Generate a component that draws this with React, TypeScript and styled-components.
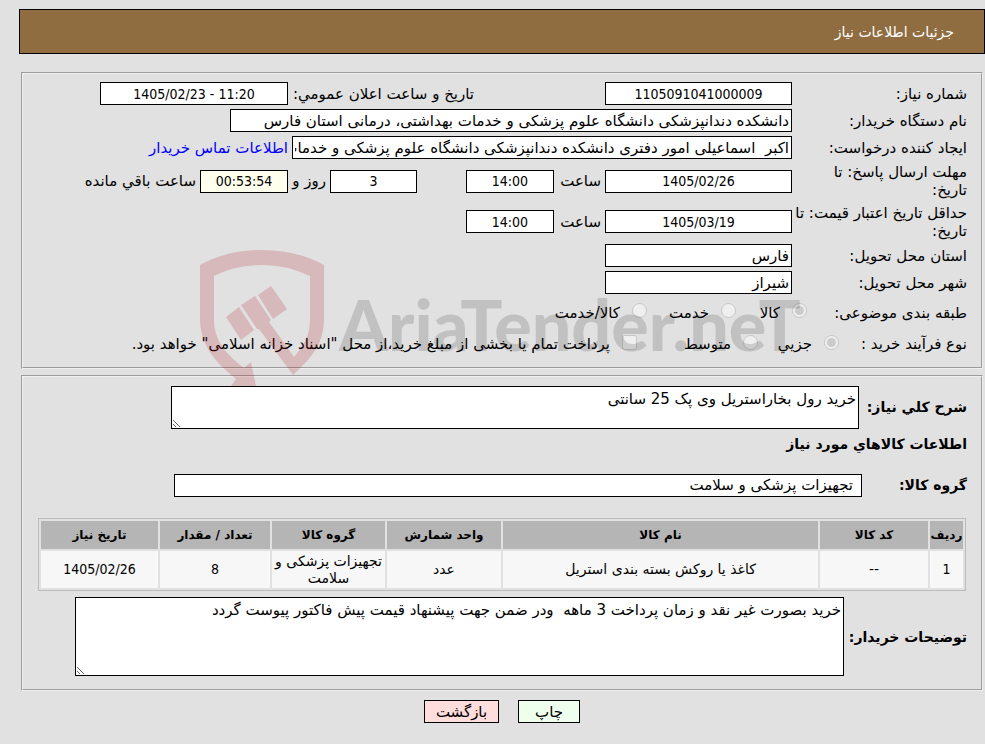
import React from "react";
import styled, { createGlobalStyle } from "styled-components";

const FONT = `"DejaVu Sans", sans-serif`;
const NUMERIC_FONT = `"DejaVu Sans Condensed", "DejaVu Sans", sans-serif`;

const GlobalStyle = createGlobalStyle`
  * { box-sizing: border-box; }
  body { margin: 0; background: #e1e1e1; }
  body, input, textarea, button { font-family: ${FONT}; color: #000; }
`;

const Page = styled.main`
  padding: 9px 0 22px 19px;
  font-size: 15px;
  line-height: 18px;
  min-height: 100vh;
`;

const TitleBar = styled.header`
  display: flex;
  align-items: center;
  height: 45px;
  padding: 0 30px;
  border: 1px solid #000;
  background: #8f6d40;
`;

const Title = styled.h1`
  margin: 0;
  font-size: 14px;
  font-weight: normal;
  color: #fff;
`;

const Panels = styled.div`
  position: relative;
  display: flex;
  flex-direction: column;
  gap: 6px;
  margin: 18px 2px 0;
`;

const Panel = styled.section<{ $top: number; $bottom: number }>`
  padding: ${(p) => p.$top}px 14px ${(p) => p.$bottom}px;
  border: 2px solid;
  border-style: groove;
  border-color: #f0f0f0;
`;

const Row = styled.div<{ $h?: number }>`
  display: flex;
  align-items: center;
  min-height: ${(p) => p.$h ?? 27}px;
`;

const Label = styled.label<{ $w?: number }>`
  flex: none;
  width: ${(p) => (p.$w ? `${p.$w}px` : "auto")};
  white-space: nowrap;
`;

const StrongLabel = styled(Label)`
  font-size: 14px;
  font-weight: bold;
`;

const RowTitle = styled.span<{ $w: number }>`
  flex: none;
  width: ${(p) => p.$w}px;
`;

const Group = styled.div<{ $before?: number }>`
  display: flex;
  align-items: center;
  gap: 4px;
  margin-inline-start: ${(p) => p.$before ?? 0}px;
`;

const Field = styled.input<{ $w: number; $pad?: number }>`
  width: ${(p) => p.$w}px;
  height: 23px;
  padding: 0 ${(p) => p.$pad ?? 2}px;
  border: 1px solid #000;
  border-radius: 0;
  background: #fff;
  font-size: 15px;
`;

const NumberField = styled(Field)<{ $tint?: string }>`
  background: ${(p) => p.$tint ?? "#fff"};
  font-family: ${NUMERIC_FONT};
  font-stretch: condensed;
  font-size: 14px;
  text-align: center;
`;

const Area = styled.textarea<{ $w: number; $h: number }>`
  display: block;
  width: ${(p) => p.$w}px;
  height: ${(p) => p.$h}px;
  padding: 3px 2px;
  border: 1px solid #000;
  border-radius: 0;
  background: #fff;
  font-size: 15px;
  line-height: 18px;
`;

const ContactLink = styled.a`
  color: #00f;
  text-decoration: none;
`;

const Choice = styled.label<{ $w?: number }>`
  display: flex;
  align-items: center;
  gap: 12px;
  width: ${(p) => (p.$w ? `${p.$w}px` : "auto")};
  white-space: nowrap;
`;

const Tick = styled.input`
  flex: none;
  width: 15px;
  height: 15px;
  margin: 0 0 4px;
`;

const SectionTitle = styled.h2`
  margin: 0;
  font-size: 14px;
  line-height: 18px;
`;

const ItemsFrame = styled.div`
  padding: 4px 1px 6px;
`;

const Items = styled.table`
  width: 100%;
  border: 1px solid #bbb;
  border-collapse: separate;
  border-spacing: 2px;
  table-layout: fixed;
  font-size: 14px;
  line-height: 17px;
  text-align: center;
`;

const HeadCell = styled.th<{ $w?: number }>`
  width: ${(p) => (p.$w ? `${p.$w}px` : "auto")};
  height: 28px;
  padding: 0;
  background: #b5b5b5;
  font-size: 12px;
  white-space: nowrap;
`;

const Cell = styled.td<{ $numeric?: boolean }>`
  height: 37px;
  padding: 1px;
  background: #f7f7f7;
  font-family: ${(p) => (p.$numeric ? NUMERIC_FONT : FONT)};
  font-stretch: ${(p) => (p.$numeric ? "condensed" : "normal")};
`;

const Actions = styled.footer`
  display: flex;
  justify-content: center;
  gap: 19px;
  margin: 9px 0 0;
`;

const Action = styled.button<{ $tint: string; $w: number }>`
  width: ${(p) => p.$w}px;
  height: 23px;
  padding: 0;
  border: 1px solid #000;
  border-radius: 0;
  background: ${(p) => p.$tint};
  font-size: 15px;
`;

const Watermark = styled.div`
  position: absolute;
  top: 177px;
  left: 178px;
  pointer-events: none;
`;

function Brand() {
  return (
    <Watermark aria-hidden="true">
      <svg width="620" height="140" viewBox="0 0 620 140" direction="ltr">
        <g fill="#b01020" fillOpacity="0.19">
          <path d="M1 16Q28 1 63 1Q98 1 125 16V69C125 92 116 106 94 126L60 80L58 80L42 56L56 47L72 71L70 73L95 108C106 95 111 86 111 69V27Q88 16 63 16Q36 16 15 27V71C15 92 28 106 45 119L52 113L57 137H32L37 130C12 110 1 93 1 69Z" />
          <path d="M27 68L40 58L55 81L42 91ZM59 46L72 37L88 60L74 70Z" />
        </g>
        <text x="140" y="102" fontFamily="Lato" fontWeight="900" fontSize="70" fill="#000" fillOpacity="0.14">
          AriaTender.neT
        </text>
      </svg>
    </Watermark>
  );
}

const COLUMNS: { title: string; width?: number; value: string; numeric?: boolean }[] = [
  { title: "ردیف", width: 33, value: "1", numeric: true },
  { title: "کد کالا", width: 108, value: "--" },
  { title: "نام کالا", value: "کاغذ یا روکش بسته بندی استریل" },
  { title: "واحد شمارش", width: 114, value: "عدد" },
  { title: "گروه کالا", width: 113, value: "تجهیزات پزشکی و سلامت" },
  { title: "تعداد / مقدار", width: 110, value: "8", numeric: true },
  { title: "تاریخ نیاز", width: 117, value: "1405/02/26", numeric: true },
];

export default function App() {
  return (
    <Page dir="rtl" lang="fa">
      <GlobalStyle />
      <TitleBar>
        <Title>جزئیات اطلاعات نیاز</Title>
      </TitleBar>
      <Panels>
        <Panel $top={6} $bottom={8}>
          <Row>
            <Label $w={175} htmlFor="number">شماره نیاز:</Label>
            <NumberField id="number" $w={187} readOnly value="1105091041000009" />
            <Group $before={131}>
              <Label $w={182} htmlFor="announced">تاریخ و ساعت اعلان عمومي:</Label>
              <NumberField id="announced" $w={188} dir="ltr" readOnly value="1405/02/23 - 11:20" />
            </Group>
          </Row>
          <Row>
            <Label $w={175} htmlFor="buyer">نام دستگاه خریدار:</Label>
            <Field id="buyer" $w={562} readOnly value="دانشکده دندانپزشکی دانشگاه علوم پزشکی و خدمات بهداشتی، درمانی استان فارس" />
          </Row>
          <Row>
            <Label $w={175} htmlFor="creator">ایجاد کننده درخواست:</Label>
            <Group>
              <Field id="creator" $w={500} readOnly value="اکبر  اسماعیلی امور دفتری دانشکده دندانپزشکی دانشگاه علوم پزشکی و خدمات بهداشتی، درمانی استان فارس" />
              <ContactLink href="#contact">اطلاعات تماس خریدار</ContactLink>
            </Group>
          </Row>
          <Row $h={40}>
            <Label $w={175} htmlFor="deadline">مهلت ارسال پاسخ: تا<br />تاریخ:</Label>
            <Group>
              <NumberField id="deadline" $w={187} readOnly value="1405/02/26" />
              <Label $w={43} htmlFor="deadline-time">ساعت</Label>
              <NumberField id="deadline-time" $w={88} readOnly value="14:00" />
            </Group>
            <Group $before={49}>
              <NumberField id="days" $w={87} readOnly value="3" />
              <Label $w={34} htmlFor="days">روز و</Label>
              <NumberField id="remaining" $w={88} $tint="#ffffee" readOnly value="00:53:54" />
              <Label htmlFor="remaining">ساعت باقي مانده</Label>
            </Group>
          </Row>
          <Row $h={41}>
            <Label $w={175} htmlFor="validity">حداقل تاریخ اعتبار قیمت: تا<br />تاریخ:</Label>
            <Group>
              <NumberField id="validity" $w={187} readOnly value="1405/03/19" />
              <Label $w={43} htmlFor="validity-time">ساعت</Label>
              <NumberField id="validity-time" $w={88} readOnly value="14:00" />
            </Group>
          </Row>
          <Row>
            <Label $w={175} htmlFor="province">استان محل تحویل:</Label>
            <Field id="province" $w={187} readOnly value="فارس" />
          </Row>
          <Row>
            <Label $w={175} htmlFor="city">شهر محل تحویل:</Label>
            <Field id="city" $w={187} readOnly value="شیراز" />
          </Row>
          <Row $h={33}>
            <RowTitle $w={160}>طبقه بندی موضوعی:</RowTitle>
            <Choice $w={71}><Tick type="radio" name="category" disabled defaultChecked />کالا</Choice>
            <Choice $w={89}><Tick type="radio" name="category" disabled />خدمت</Choice>
            <Choice><Tick type="radio" name="category" disabled />کالا/خدمت</Choice>
          </Row>
          <Row $h={30}>
            <RowTitle $w={128}>نوع فرآیند خرید :</RowTitle>
            <Choice $w={81}><Tick type="radio" name="process" disabled defaultChecked />جزیي</Choice>
            <Choice $w={121}><Tick type="radio" name="process" disabled />متوسط</Choice>
            <Choice><Tick type="checkbox" disabled />پرداخت تمام یا بخشی از مبلغ خرید،از محل "اسناد خزانه اسلامی" خواهد بود.</Choice>
          </Row>
        </Panel>

        <Panel $top={5} $bottom={13}>
          <Row $h={50}>
            <StrongLabel $w={108} htmlFor="summary">شرح کلي نیاز:</StrongLabel>
            <Area id="summary" $w={688} $h={43} readOnly value="خرید رول بخاراستریل وی پک 25 سانتی" />
          </Row>
          <Row $h={24}>
            <SectionTitle>اطلاعات کالاهاي مورد نیاز</SectionTitle>
          </Row>
          <Row $h={58}>
            <StrongLabel $w={105} htmlFor="group">گروه کالا:</StrongLabel>
            <Field id="group" $w={688} $pad={8} readOnly value="تجهیزات پزشکی و سلامت" />
          </Row>
          <ItemsFrame>
            <Items>
              <thead>
                <tr>
                  {COLUMNS.map((c) => (
                    <HeadCell key={c.title} $w={c.width} scope="col">{c.title}</HeadCell>
                  ))}
                </tr>
              </thead>
              <tbody>
                <tr>
                  {COLUMNS.map((c) => (
                    <Cell key={c.title} $numeric={c.numeric}>{c.value}</Cell>
                  ))}
                </tr>
              </tbody>
            </Items>
          </ItemsFrame>
          <Row $h={79}>
            <StrongLabel $w={123} htmlFor="notes">توضیحات خریدار:</StrongLabel>
            <Area id="notes" $w={769} $h={79} readOnly value="خرید بصورت غیر نقد و زمان پرداخت 3 ماهه  ودر ضمن جهت پیشنهاد قیمت پیش فاکتور پیوست گردد" />
          </Row>
        </Panel>
        <Brand />
      </Panels>
      <Actions>
        <Action type="button" $w={62} $tint="#eeffee">چاپ</Action>
        <Action type="button" $w={75} $tint="#ffdddd">بازگشت</Action>
      </Actions>
    </Page>
  );
}
